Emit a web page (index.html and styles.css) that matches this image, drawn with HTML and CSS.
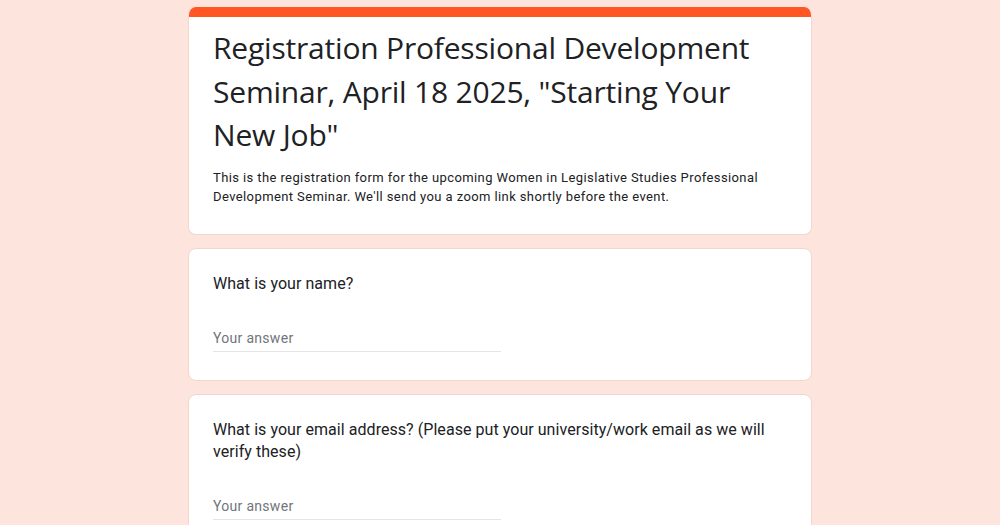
FILE: index.html
```html
<!DOCTYPE html>
<html lang="en">
<head>
    <meta charset="UTF-8">
    <meta name="viewport" content="width=device-width, initial-scale=1.0">
    <title>Registration Professional Development Seminar</title>
    <link rel="stylesheet" href="styles.css">
</head>
<body>
    <div class="form">
        <div class="card header-card">
            <div class="accent"></div>
            <div class="header-body">
                <h1 class="form-title">Registration Professional Development Seminar, April 18 2025, "Starting Your New Job"</h1>
                <p class="form-desc">This is the registration form for the upcoming Women in Legislative Studies Professional Development Seminar. We'll send you a zoom link shortly before the event.</p>
            </div>
        </div>

        <div class="card question">
            <div class="question-title">What is your name?</div>
            <input type="text" class="answer" placeholder="Your answer">
        </div>

        <div class="card question">
            <div class="question-title">What is your email address? (Please put your university/work email as we will verify these)</div>
            <input type="text" class="answer" placeholder="Your answer">
        </div>
    </div>
</body>
</html>
```

FILE: styles.css
```css
body {
    margin: 0;
    background: #fde5de;
    font-family: Roboto, "Liberation Sans", sans-serif;
    color: #202124;
}

.form {
    width: 624px;
    margin: 7px auto 0;
    display: flex;
    flex-direction: column;
    gap: 13px;
}

.card {
    background: #fff;
    border: 1px solid #f3d7cf;
    border-radius: 8px;
    box-sizing: border-box;
}

.header-card {
    overflow: hidden;
    border-top: none;
}

.accent {
    height: 10px;
    background: #ff5623;
}

.header-body {
    padding: 9px 24px 27px;
}

.form-title {
    margin: 0;
    font-family: "Open Sans", Roboto, sans-serif;
    font-size: 30px;
    font-weight: 400;
    line-height: 43.5px;
    letter-spacing: -0.2px;
}

.form-desc {
    margin: 11px 0 0;
    font-size: 13px;
    line-height: 19.5px;
    letter-spacing: 0.4px;
}

.question {
    padding: 24px 24px 28px;
}

.question-title {
    font-size: 16px;
    line-height: 22px;
    letter-spacing: 0.05px;
}

.answer {
    display: block;
    width: 288px;
    margin-top: 33px;
    padding: 0 0 3px;
    border: none;
    border-bottom: 1px solid #e4e4e4;
    font-family: Roboto, sans-serif;
    font-size: 14px;
    line-height: 20px;
    letter-spacing: 0.3px;
    outline: none;
}

.answer::placeholder {
    color: #70757a;
}
```
